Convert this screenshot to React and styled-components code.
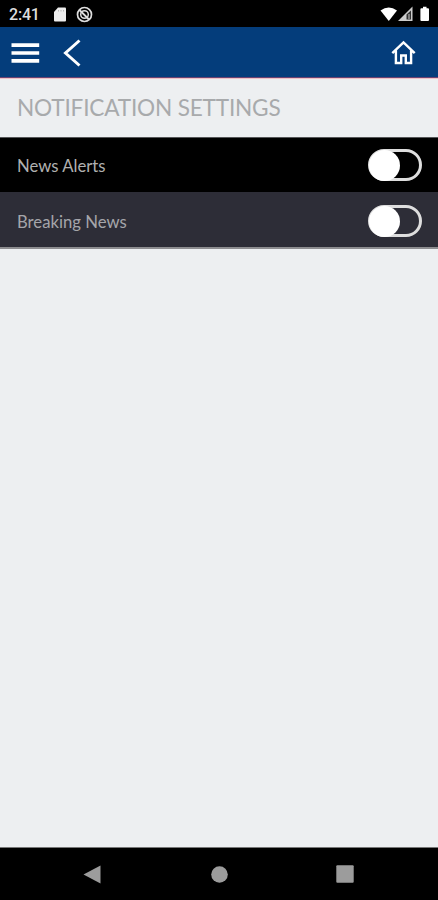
import styled, { createGlobalStyle } from 'styled-components';

const GlobalStyle = createGlobalStyle`
	* {
		box-sizing: border-box;
	}

	body {
		margin: 0;
		background: #edeff1;
	}
`;

const Screen = styled.div`
	display: flex;
	flex-direction: column;
	width: 100%;
	height: 100vh;
	overflow: hidden;
	background: #edeff1;
	font-family: Lato, sans-serif;
`;

const StatusBar = styled.div`
	display: flex;
	align-items: center;
	flex: none;
	height: 27px;
	padding: 1px 8px 0 9px;
	background: #000;
	color: #dedede;
`;

const Clock = styled.span`
	width: 44px;
	font: 500 16px/25px Roboto, sans-serif;
	letter-spacing: -0.2px;
`;

const StatusIcons = styled.div`
	display: flex;
	align-items: center;
	gap: ${(props) => props.$gap}px;
	margin-left: ${(props) => (props.$right ? 'auto' : 0)};

	svg {
		display: block;
	}
`;

const Header = styled.header`
	display: flex;
	align-items: center;
	flex: none;
	height: 52px;
	padding: 0 22px 0 11px;
	background: #043d7b;
	border-bottom: 1px solid #efc3c6;
	box-shadow: inset 0 -1px #6b4272;
`;

const IconButton = styled.button`
	display: flex;
	padding: 0;
	border: 0;
	background: none;
	margin-left: ${(props) => props.$left || 0};
`;

const Title = styled.h1`
	flex: none;
	height: 58px;
	margin: 0;
	padding: 0 17px;
	color: #a8aaac;
	font-size: 22.6px;
	font-weight: 400;
	line-height: 58px;
	letter-spacing: -0.18px;
	white-space: nowrap;
`;

const Settings = styled.div`
	flex: none;
	border-top: 1px solid #555658;
	border-bottom: 2px solid #8d8d90;
`;

const Row = styled.div`
	display: flex;
	align-items: center;
	justify-content: space-between;
	height: ${(props) => (props.$shaded ? 55 : 54)}px;
	padding: ${(props) => (props.$shaded ? 3 : 0)}px 16px 0 17px;
	background: ${(props) => (props.$shaded ? '#2d2d37' : '#000')};
	color: ${(props) => (props.$shaded ? '#a5a5aa' : '#b0b0b0')};
	font-size: 16.7px;
	line-height: 24px;
`;

const Label = styled.span`
	padding-top: 1px;
`;

const Switch = styled.button`
	display: flex;
	align-items: center;
	width: 54px;
	height: 32px;
	padding: 0;
	border: 3px solid #dedede;
	border-radius: 16px;
	background: transparent;
`;

const Knob = styled.span`
	width: 31px;
	height: 31px;
	margin-left: -2.5px;
	border-radius: 50%;
	background: #fff;
`;

const NavBar = styled.nav`
	display: flex;
	align-items: center;
	justify-content: space-between;
	flex: none;
	height: 53px;
	margin-top: auto;
	padding: 0 84px 0 83px;
	border-top: 1px solid #777;
	background: #000;
`;

const settings = [{ label: 'News Alerts' }, { label: 'Breaking News', shaded: true }];

const App = () => {
	return (
		<Screen>
			<GlobalStyle />
			<StatusBar>
				<Clock>2:41</Clock>
				<StatusIcons $gap={9}>
					<svg width="14" height="15" viewBox="0 0 14 15">
						<path
							d="M5 .5h7q1 0 1 1v12q0 1-1 1H2q-1 0-1-1V5z"
							fill="#eee"
						/>
						<path d="M5.5 3v1.500M8 3v1.500M10.500 3v1.500" stroke="#aaa" strokeWidth=".8" />
					</svg>
					<svg width="17" height="17" viewBox="0 0 17 17" fill="none" stroke="#ddd">
						<circle cx="8.5" cy="8.5" r="7" strokeWidth="1.7" />
						<circle cx="8.5" cy="8.5" r="3.8" strokeWidth="1.5" />
						<path d="M3.5 4l9.5 9.5" strokeWidth="1.8" />
					</svg>
				</StatusIcons>
				<StatusIcons $gap={0} $right>
					<svg width="50" height="17" viewBox="0 0 50 17">
						<path d="M.5 4.500Q8.800-1.500 17 4.500L8.800 15z" fill="#fff" />
						<path d="M18 15L32.500 .5V15z" fill="#ccc" />
						<path d="M26.500 8.500L31 4.500v9h-4.500z" fill="#333" />
						<path d="M29 8v5" stroke="#ccc" strokeWidth="1" />
						<path
							d="M43 .7h3.500v1.600H48q1 0 1 1V14q0 1-1 1h-6.600q-1 0-1-1V3.300q0-1 1-1H43z"
							fill="#fff"
						/>
					</svg>
				</StatusIcons>
			</StatusBar>
			<Header>
				<IconButton aria-label="Menu">
					<svg width="29" height="21" viewBox="0 0 29 21">
						<path
							d="M.5 3.200h27.700M.5 11h27.700M.5 18.800h27.700"
							stroke="#fff"
							strokeWidth="3.700"
						/>
					</svg>
				</IconButton>
				<IconButton aria-label="Back" $left="23px">
					<svg width="18" height="28" viewBox="0 0 18 28">
						<path
							d="M16.500 1.500L2.500 14l14 12.500"
							fill="none"
							stroke="#fff"
							strokeWidth="3"
						/>
					</svg>
				</IconButton>
				<IconButton aria-label="Home" $left="auto">
					<svg width="25" height="25" viewBox="0 0 25 25">
						<path
							d="M1.300 13.200L12.500 2.500 23.700 13.200M4.900 10.500v12.500h5.300v-7.500h4.600V23h5.300V10.500"
							fill="none"
							stroke="#fff"
							strokeWidth="2.400"
						/>
					</svg>
				</IconButton>
			</Header>
			<Title>NOTIFICATION SETTINGS</Title>
			<Settings>
				{settings.map((item) => (
					<Row key={item.label} $shaded={item.shaded}>
						<Label>{item.label}</Label>
						<Switch role="switch" aria-checked="false" aria-label={item.label}>
							<Knob />
						</Switch>
					</Row>
				))}
			</Settings>
			<NavBar>
				<svg width="18" height="19" viewBox="0 0 18 19">
					<path d="M.5 9.500L17.500 .5v18z" fill="#9c9c9c" />
				</svg>
				<svg width="18" height="17" viewBox="0 0 18 17">
					<circle cx="9.5" cy="8.5" r="8.300" fill="#9c9c9c" />
				</svg>
				<svg width="18" height="18" viewBox="0 0 18 18">
					<rect x=".3" y=".3" width="17.400" height="17.400" rx="1" fill="#9c9c9c" />
				</svg>
			</NavBar>
		</Screen>
	);
};

export default App;
